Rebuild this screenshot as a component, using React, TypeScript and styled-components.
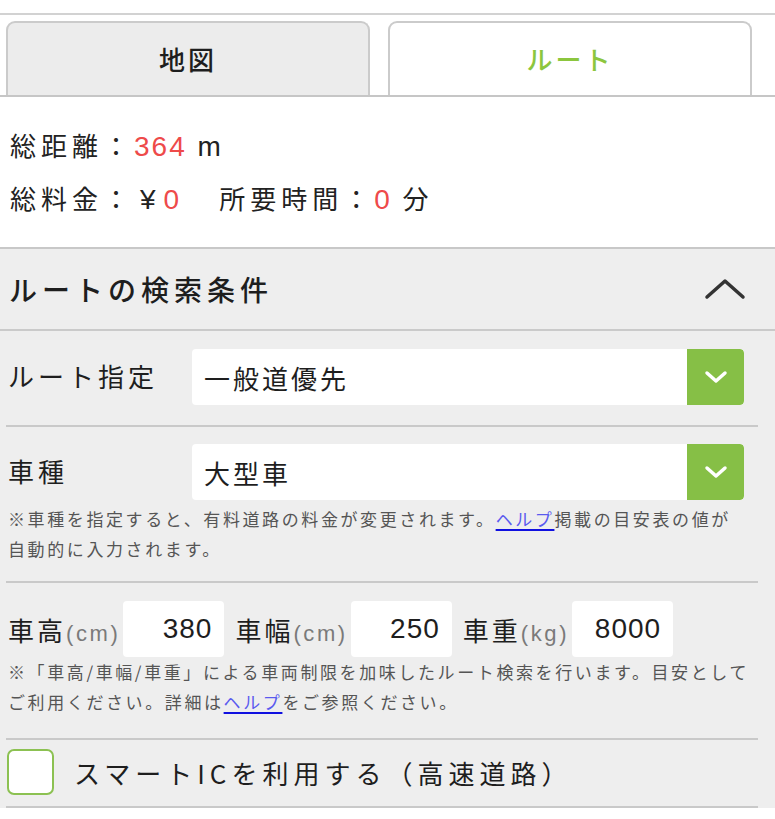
import React from "react";
import styled, { createGlobalStyle } from "styled-components";

const GlobalStyle = createGlobalStyle`
  html, body { margin: 0; padding: 0; background: #ffffff; }
  body {
    font-family: "Noto Sans CJK JP", "Liberation Sans", sans-serif;
    color: #222;
  }
  * { box-sizing: border-box; }
`;

const Page = styled.div`
  width: 775px;
  background: #ffffff;
`;

const TopStrip = styled.div`
  height: 15px;
  border-bottom: 2px solid #d2d2d2;
`;

const TabBar = styled.div`
  display: flex;
  gap: 18px;
  padding: 6px 23px 0 6px;
  border-bottom: 2px solid #c6c6c6;
`;

const Tab = styled.div<{ $active?: boolean }>`
  width: 364px;
  height: 74px;
  display: flex;
  align-items: center;
  justify-content: center;
  border: 2px solid #cbcbcb;
  border-bottom: none;
  border-radius: 9px 9px 0 0;
  background: ${(p) => (p.$active ? "#ffffff" : "#ececec")};
  color: ${(p) => (p.$active ? "#8cc63e" : "#1e1e1e")};
  font-size: 26px;
  font-weight: 500;
  letter-spacing: 3px;
  padding-bottom: 2px;
`;

const Summary = styled.div`
  background: #ffffff;
  padding: 21px 0 23px 10px;
  border-bottom: 2px solid #c8c8c8;
`;

const SummaryLine = styled.div`
  height: 53px;
  line-height: 53px;
  font-size: 26px;
  letter-spacing: 5px;
  color: #222;
  white-space: nowrap;
`;

const Num = styled.span`
  font-family: "Liberation Sans", "Noto Sans CJK JP", sans-serif;
  font-size: 28px;
  color: #ee4a4a;
  letter-spacing: 2px;
`;

const Unit = styled.span`
  font-family: "Liberation Sans", "Noto Sans CJK JP", sans-serif;
  font-size: 28px;
  letter-spacing: 2px;
`;

const Yen = styled.span`
  font-family: "Liberation Sans", "Noto Sans CJK JP", sans-serif;
  font-size: 28px;
  margin-left: 6px;
  letter-spacing: 8px;
`;

const Spacer = styled.span`
  display: inline-block;
  width: 38px;
`;

const Conditions = styled.div`
  background: #eeeeee;
`;

const Header = styled.div`
  height: 82px;
  display: flex;
  align-items: center;
  justify-content: space-between;
  padding: 0 29px 0 9px;
  border-bottom: 2px solid #cacaca;
`;

const HeaderTitle = styled.div`
  font-size: 28px;
  font-weight: 500;
  letter-spacing: 5px;
  color: #1e1e1e;
`;

const Body = styled.div`
  padding: 0 17px 0 6px;
`;

const Row = styled.div<{ $pt: number; $pb: number }>`
  padding: ${(p) => p.$pt}px 0 ${(p) => p.$pb}px 0;
  border-bottom: 2px solid #c9c9c9;
`;

const FieldLine = styled.div`
  display: grid;
  grid-template-columns: 186px 1fr;
  align-items: center;
`;

const Label = styled.div`
  padding-left: 2px;
  font-size: 26px;
  letter-spacing: 4px;
  color: #1e1e1e;
  align-self: start;
  padding-top: 8px;
`;

const SelectBox = styled.div`
  height: 56px;
  margin-right: 14px;
  display: flex;
  background: #ffffff;
  border-radius: 4px;
  overflow: hidden;
`;

const SelectText = styled.div`
  flex: 1;
  display: flex;
  align-items: center;
  padding-left: 12px;
  font-size: 26px;
  letter-spacing: 3px;
  color: #1e1e1e;
`;

const SelectButton = styled.div`
  width: 57px;
  display: flex;
  align-items: center;
  justify-content: center;
  background: #86bf46;
  border-radius: 0 4px 4px 0;
`;

const Note = styled.div<{ $mt?: number }>`
  margin-top: ${(p) => p.$mt ?? 0}px;
  font-size: 17px;
  line-height: 30px;
  letter-spacing: 2.6px;
  color: #555555;
  padding-left: 2px;
  white-space: nowrap;
`;

const HelpLink = styled.a`
  color: #5a5aee;
  text-decoration: underline;
  text-decoration-color: #1010e0;
  text-decoration-thickness: 2px;
  text-underline-offset: 3px;
`;

const SizeLine = styled.div`
  display: flex;
  align-items: center;
  padding-left: 2px;
`;

const SizeLabel = styled.div`
  font-size: 26px;
  letter-spacing: 3px;
  color: #1e1e1e;
  margin-right: 3px;
  white-space: nowrap;
`;

const SizeUnit = styled.span`
  font-family: "Liberation Sans", sans-serif;
  font-size: 22px;
  letter-spacing: 2.6px;
  color: #7a7a7a;
`;

const NumBox = styled.div`
  width: 101px;
  height: 56px;
  margin-right: 11px;
  background: #ffffff;
  border-radius: 4px;
  display: flex;
  align-items: center;
  justify-content: flex-end;
  padding-right: 12px;
  font-family: "Liberation Sans", sans-serif;
  font-size: 28px;
  letter-spacing: 1px;
  color: #1e1e1e;
`;

const CheckLine = styled.div`
  display: flex;
  align-items: center;
  gap: 20px;
  padding-left: 1px;
`;

const CheckBox = styled.div`
  width: 47px;
  height: 46px;
  background: #ffffff;
  border: 2px solid #8cc152;
  border-radius: 7px;
`;

const CheckText = styled.div`
  font-size: 26px;
  letter-spacing: 5px;
  color: #1e1e1e;
  white-space: nowrap;
`;

const ChevronDown = () => (
  <svg width="24" height="14" viewBox="0 0 24 14">
    <polyline points="3,3 12,11 21,3" fill="none" stroke="#ffffff" strokeWidth="3.5" strokeLinecap="round" strokeLinejoin="round" />
  </svg>
);

const ChevronUp = () => (
  <svg width="42" height="22" viewBox="0 0 42 22">
    <polyline points="3,19 21,3 39,19" fill="none" stroke="#333" strokeWidth="3.5" strokeLinecap="round" strokeLinejoin="round" />
  </svg>
);

export default function App() {
  return (
    <Page>
      <GlobalStyle />
      <TopStrip />
      <TabBar>
        <Tab>地図</Tab>
        <Tab $active>ルート</Tab>
      </TabBar>
      <Summary>
        <SummaryLine>
          総距離：<Num>364</Num> <Unit>m</Unit>
        </SummaryLine>
        <SummaryLine>
          総料金：<Yen>¥</Yen>
          <Num>0</Num>
          <Spacer />
          所要時間：<Num>0</Num> 分
        </SummaryLine>
      </Summary>
      <Conditions>
        <Header>
          <HeaderTitle>ルートの検索条件</HeaderTitle>
          <ChevronUp />
        </Header>
        <Body>
          <Row $pt={18} $pb={20}>
            <FieldLine>
              <Label>ルート指定</Label>
              <SelectBox>
                <SelectText>一般道優先</SelectText>
                <SelectButton>
                  <ChevronDown />
                </SelectButton>
              </SelectBox>
            </FieldLine>
          </Row>
          <Row $pt={17} $pb={17}>
            <FieldLine>
              <Label>車種</Label>
              <SelectBox>
                <SelectText>大型車</SelectText>
                <SelectButton>
                  <ChevronDown />
                </SelectButton>
              </SelectBox>
            </FieldLine>
            <Note $mt={4}>
              ※車種を指定すると、有料道路の料金が変更されます。<HelpLink>ヘルプ</HelpLink>掲載の目安表の値が
              <br />
              自動的に入力されます。
            </Note>
          </Row>
          <Row $pt={18} $pb={21}>
            <SizeLine>
              <SizeLabel>
                車高<SizeUnit>(cm)</SizeUnit>
              </SizeLabel>
              <NumBox>380</NumBox>
              <SizeLabel>
                車幅<SizeUnit>(cm)</SizeUnit>
              </SizeLabel>
              <NumBox>250</NumBox>
              <SizeLabel>
                車重<SizeUnit>(kg)</SizeUnit>
              </SizeLabel>
              <NumBox>8000</NumBox>
            </SizeLine>
            <Note>
              ※「車高/車幅/車重」による車両制限を加味したルート検索を行います。目安として
              <br />
              ご利用ください。詳細は<HelpLink>ヘルプ</HelpLink>をご参照ください。
            </Note>
          </Row>
          <Row $pt={9} $pb={11}>
            <CheckLine>
              <CheckBox />
              <CheckText>スマートICを利用する（高速道路）</CheckText>
            </CheckLine>
          </Row>
        </Body>
      </Conditions>
    </Page>
  );
}
